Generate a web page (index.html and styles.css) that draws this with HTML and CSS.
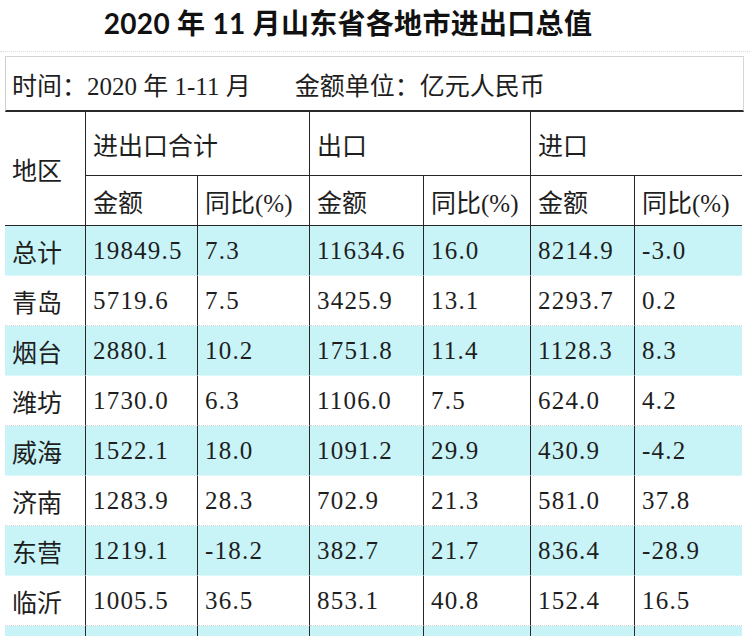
FILE: index.html
```html
<!DOCTYPE html>
<html lang="zh-CN">
<head>
<meta charset="utf-8">
<title>2020年11月山东省各地市进出口总值</title>
<link rel="stylesheet" href="styles.css">
</head>
<body>
<div class="page">
  <h1 class="title">2020 年 11 月山东省各地市进出口总值</h1>
  <div class="unit-box">
    <span class="unit-time">时间：2020 年 1-11 月</span>
    <span class="unit-money">金额单位：亿元人民币</span>
  </div>
  <div class="sheet">
    <div class="cell head region">地区</div>
    <div class="cell head group">进出口合计</div>
    <div class="cell head group">出口</div>
    <div class="cell head group last">进口</div>
    <div class="cell head">金额</div>
    <div class="cell head">同比(%)</div>
    <div class="cell head">金额</div>
    <div class="cell head">同比(%)</div>
    <div class="cell head">金额</div>
    <div class="cell head last">同比(%)</div>

    <div class="row cyan"><div class="cell">总计</div><div class="cell">19849.5</div><div class="cell">7.3</div><div class="cell">11634.6</div><div class="cell">16.0</div><div class="cell">8214.9</div><div class="cell">-3.0</div></div>
    <div class="row"><div class="cell">青岛</div><div class="cell">5719.6</div><div class="cell">7.5</div><div class="cell">3425.9</div><div class="cell">13.1</div><div class="cell">2293.7</div><div class="cell">0.2</div></div>
    <div class="row cyan"><div class="cell">烟台</div><div class="cell">2880.1</div><div class="cell">10.2</div><div class="cell">1751.8</div><div class="cell">11.4</div><div class="cell">1128.3</div><div class="cell">8.3</div></div>
    <div class="row"><div class="cell">潍坊</div><div class="cell">1730.0</div><div class="cell">6.3</div><div class="cell">1106.0</div><div class="cell">7.5</div><div class="cell">624.0</div><div class="cell">4.2</div></div>
    <div class="row cyan"><div class="cell">威海</div><div class="cell">1522.1</div><div class="cell">18.0</div><div class="cell">1091.2</div><div class="cell">29.9</div><div class="cell">430.9</div><div class="cell">-4.2</div></div>
    <div class="row"><div class="cell">济南</div><div class="cell">1283.9</div><div class="cell">28.3</div><div class="cell">702.9</div><div class="cell">21.3</div><div class="cell">581.0</div><div class="cell">37.8</div></div>
    <div class="row cyan"><div class="cell">东营</div><div class="cell">1219.1</div><div class="cell">-18.2</div><div class="cell">382.7</div><div class="cell">21.7</div><div class="cell">836.4</div><div class="cell">-28.9</div></div>
    <div class="row"><div class="cell">临沂</div><div class="cell">1005.5</div><div class="cell">36.5</div><div class="cell">853.1</div><div class="cell">40.8</div><div class="cell">152.4</div><div class="cell">16.5</div></div>
    <div class="row cyan"><div class="cell"></div><div class="cell"></div><div class="cell"></div><div class="cell"></div><div class="cell"></div><div class="cell"></div><div class="cell"></div></div>
  </div>
</div>
</body>
</html>
```

FILE: styles.css
```css
html, body {
  margin: 0;
  padding: 0;
  background: #ffffff;
}

body {
  height: 636px;
  overflow: hidden;
  color: #1e1e1e;
  font-family: "Liberation Serif", "Noto Sans CJK SC", serif;
}

.page {
  width: 750px;
}

.title {
  margin: 0 0 4px 0;
  height: 52px;
  padding-right: 54px;
  box-sizing: border-box;
  border-bottom: 1px dotted #dcdcdc;
  text-align: center;
  font-family: "Lato", "Noto Sans CJK SC", sans-serif;
  font-weight: 700;
  font-size: 28px;
  line-height: 46px;
  color: #111;
  letter-spacing: 0.3px;
}

.unit-box {
  margin-left: 5px;
  width: 739px;
  height: 56px;
  box-sizing: border-box;
  border-top: 1px solid #d2d2d2;
  border-left: 1px solid #cfcfcf;
  border-right: 1px solid #d6d6d6;
  border-bottom: 2px solid #2a2a2a;
  display: flex;
  align-items: center;
  gap: 44px;
  padding-left: 6px;
  font-size: 25px;
}

.sheet {
  margin-left: 5px;
  display: grid;
  grid-template-columns: 81px 112px 112px 114px 107px 104px 107px;
  grid-template-rows: 64px 50px repeat(9, 50px);
  font-size: 25px;
}

.row {
  display: contents;
}

.cell {
  display: flex;
  align-items: center;
  padding-left: 7px;
  box-sizing: border-box;
  border-right: 1px solid #262626;
  border-bottom: 1px dotted #d4d4d4;
  white-space: nowrap;
}

.row .cell:not(:first-child) {
  letter-spacing: 1.2px;
}

.row .cell:last-child {
  border-right: none;
}

.row.cyan .cell {
  background: #c8f4f8;
  border-bottom-color: #eefcfd;
}

.head {
  border-bottom: 1px solid #262626;
}

.head.region {
  grid-row: span 2;
}

.head.group {
  grid-column: span 2;
}

.head.last {
  border-right: none;
}
```
